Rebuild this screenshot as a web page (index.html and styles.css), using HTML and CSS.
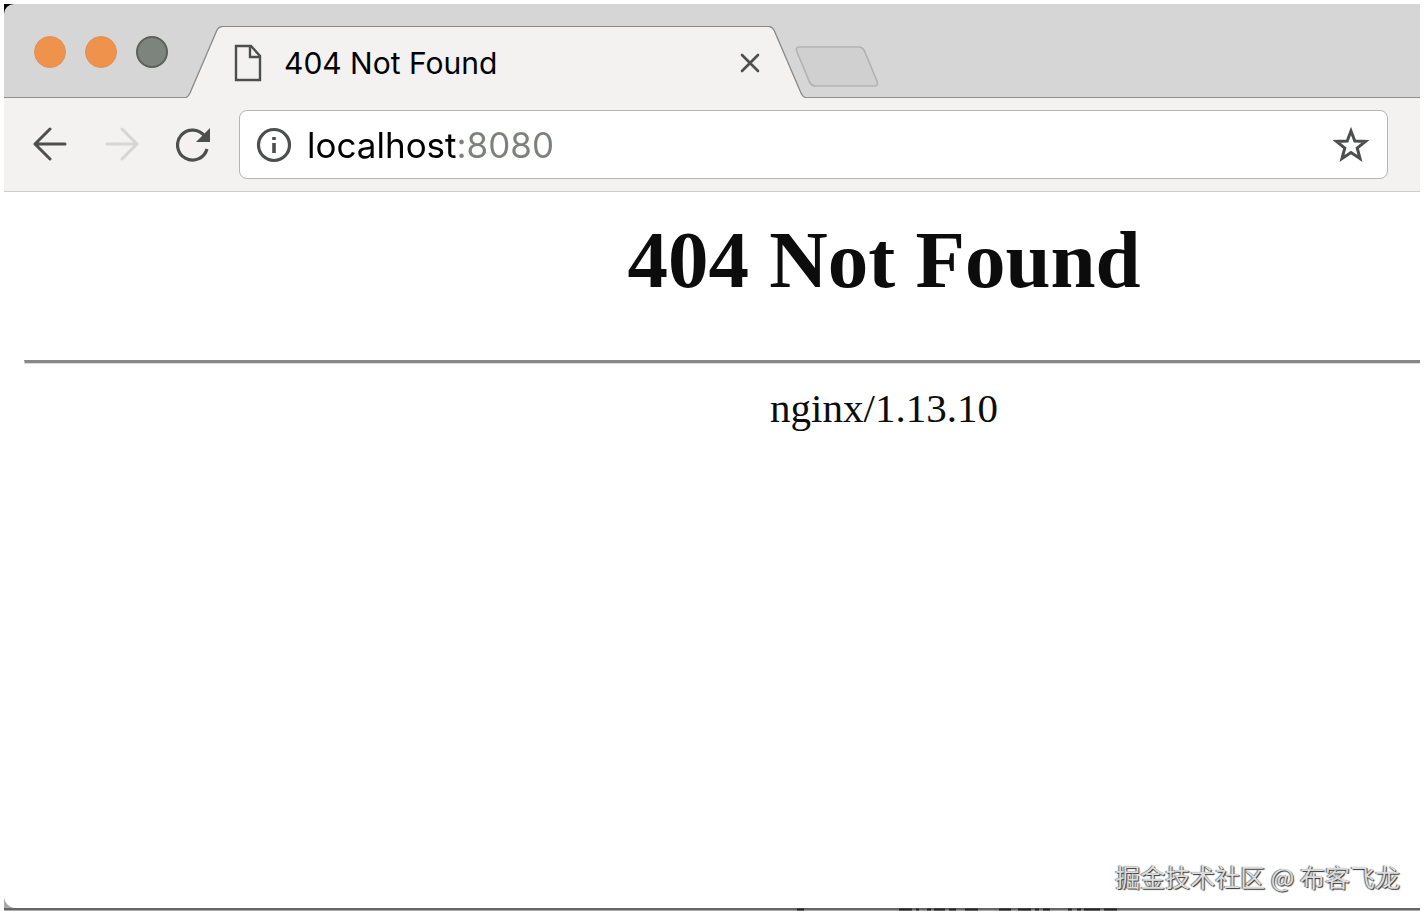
FILE: index.html
```html
<!DOCTYPE html>
<html lang="en">
<head>
    <meta charset="UTF-8">
    <meta name="viewport" content="width=device-width, initial-scale=1.0">
    <title>404 Not Found</title>
    <link rel="stylesheet" href="styles.css">
</head>
<body>

    <div class="desktop">
        <div class="window">

            <!-- Tab strip -->
            <div class="tab-strip">
                <div class="window-buttons">
                    <button type="button" class="dot" aria-label="Close window"></button>
                    <button type="button" class="dot" aria-label="Minimize window"></button>
                    <button type="button" class="dot dot-gray" aria-label="Zoom window"></button>
                </div>

                <div class="tab">
                    <svg class="tab-edge" width="36" height="72" viewBox="0 0 36 72">
                        <path d="M0 72 Q2 71 4 67 L31 5 Q33 0 36 0 V72 Z" fill="#f3f2f1"/>
                        <path d="M0 71.5 Q2 71 4 67 L31 4 Q33 .5 36 .5" fill="none" stroke="#888" stroke-width="1.3"/>
                    </svg>
                    <div class="tab-body">
                        <svg width="28" height="38" viewBox="0 0 28 38" fill="none" stroke="#4d4f4f" stroke-width="2.4">
                            <path d="M2 2 H17 L26 12 V36 H2 Z"/>
                            <path d="M16 2 V13 H26"/>
                        </svg>
                        <span class="tab-title">404 Not Found</span>
                        <button type="button" class="icon-button" aria-label="Close tab">
                            <svg width="20" height="20" viewBox="0 0 20 20" stroke="#4d4f4f" stroke-width="2.6" stroke-linecap="round">
                                <path d="M2 2 L18 18 M18 2 L2 18"/>
                            </svg>
                        </button>
                    </div>
                    <svg class="tab-edge" width="36" height="72" viewBox="0 0 36 72">
                        <path d="M36 72 Q34 71 32 67 L5 5 Q3 0 0 0 V72 Z" fill="#f3f2f1"/>
                        <path d="M36 71.5 Q34 71 32 67 L5 4 Q3 .5 0 .5" fill="none" stroke="#888" stroke-width="1.3"/>
                    </svg>
                </div>

                <button type="button" class="icon-button new-tab" aria-label="New tab">
                    <svg width="84" height="42" viewBox="0 0 84 42">
                        <path d="M4 1 H64 Q67 1 69 4 L82 35 Q84 40 79 40 H21 Q17 40 15 37 L2 6 Q0 1 4 1 Z" fill="#d0d0d0" stroke="#b2b2b2" stroke-width="1.6"/>
                    </svg>
                </button>
            </div>

            <!-- Toolbar -->
            <div class="toolbar">
                <button type="button" class="icon-button" aria-label="Back">
                    <svg width="36" height="36" viewBox="0 0 36 36" fill="none" stroke="#4d4f4f" stroke-width="3" stroke-linecap="round" stroke-linejoin="round">
                        <path d="M33 17 H3 M18 2 L3 17 L18 32"/>
                    </svg>
                </button>
                <button type="button" class="icon-button" aria-label="Forward" disabled>
                    <svg width="36" height="36" viewBox="0 0 36 36" fill="none" stroke="#d6d6d5" stroke-width="3" stroke-linecap="round" stroke-linejoin="round">
                        <path d="M3 17 H33 M18 2 L33 17 L18 32"/>
                    </svg>
                </button>
                <button type="button" class="icon-button" aria-label="Reload">
                    <svg width="36" height="36" viewBox="0 0 36 36">
                        <path d="M31 22 A15 15 0 1 1 29 9.7" fill="none" stroke="#4d4f4f" stroke-width="3.2"/>
                        <path d="M34 1 V15 H20 Z" fill="#4d4f4f"/>
                    </svg>
                </button>

                <div class="address-bar">
                    <svg width="36" height="36" viewBox="0 0 36 36">
                        <circle cx="18" cy="18" r="15.5" fill="none" stroke="#4d4f4f" stroke-width="3.2"/>
                        <path d="M16.2 10 H19.8 V13 H16.2 Z M16.2 16 H19.8 V26 H16.2 Z" fill="#4d4f4f"/>
                    </svg>
                    <input type="text" class="address" aria-label="Address" value="localhost:8080" spellcheck="false">
                    <button type="button" class="icon-button" aria-label="Bookmark this page">
                        <svg width="38" height="38" viewBox="0 0 38 38">
                            <path d="M18 5 L21.8 15 L32.5 15.4 L24.2 22 L27 32.5 L18 26.5 L9 32.5 L11.8 22 L3.5 15.4 L14.2 15 Z" fill="none" stroke="#4d4f4f" stroke-width="3"/>
                        </svg>
                    </button>
                </div>
            </div>

            <!-- The page is wider than the window, the rest is cut off -->
            <main class="page">
                <div class="page-content">
                    <h1>404 Not Found</h1>
                    <hr>
                    <p>nginx/1.13.10</p>
                </div>
            </main>
        </div>

        <!-- Edge of the window behind -->
        <div class="window-behind">
            <svg width="320" height="3" viewBox="0 0 320 3" stroke="#222" stroke-width="2">
                <path d="M0 1.5 H7 M102 1.5 H115 M119 1.5 H122 M130 1.5 H134 M137 1.5 H148 M152 1.5 H159 M168 1.5 H181 M202 1.5 H214 M221 1.5 H234 M238 1.5 H242 M246 1.5 H253 M271 1.5 H275 M280 1.5 H284 M287 1.5 H303 M307 1.5 H320"/>
            </svg>
        </div>

        <div class="watermark" lang="zh">掘金技术社区 @ 布客飞龙</div>
    </div>

</body>
</html>
```
FILE: styles.css
```css
* {
    box-sizing: border-box;
}

body {
    font-family: Inter, "Noto Sans", sans-serif;
    background-color: #ffffff;
    margin: 0;
}

svg {
    display: block;
    flex-shrink: 0;
}

.desktop {
    position: relative;
    display: flex;
    flex-direction: column;
    height: 100vh;
    padding: 4px 5px 5px 4px;
    overflow: hidden;
}

.window {
    display: flex;
    flex-direction: column;
    flex: 1;
    min-height: 0;
    background: linear-gradient(#000000 50%, #aaaaaa 50%);
}

.icon-button {
    display: block;
    padding: 0;
    border: none;
    background: none;
    cursor: pointer;
}

/* Tab strip */
.tab-strip {
    display: flex;
    align-items: flex-end;
    height: 94px;
    background-color: #d6d6d6;
    border-top-left-radius: 10px;
    box-shadow: inset 0 -1px 0 #909090;
}

.window-buttons {
    display: flex;
    gap: 19px;
    align-self: center;
    padding: 2px 18px 0 30px;
}

.dot {
    width: 32px;
    height: 32px;
    padding: 0;
    border: 1px solid #e29156;
    border-radius: 50%;
    background-color: #ee924c;
}

.dot-gray {
    border: 2px solid #5b605c;
    background-color: #7d837d;
}

.tab {
    display: flex;
    width: 619px;
}

.tab-body {
    display: flex;
    flex: 1;
    align-items: center;
    height: 72px;
    padding: 0 9px 0 12px;
    background-color: #f3f2f1;
    border-top: 1px solid #888888;
}

.tab-title {
    flex: 1;
    padding-left: 22px;
    font-size: 30px;
    line-height: 42px;
    color: #000000;
}

.new-tab {
    margin: 0 0 10px -10px;
}

/* Toolbar */
.toolbar {
    display: flex;
    align-items: center;
    gap: 36px;
    height: 94px;
    padding: 0 32px 0 28px;
    background-color: #f3f2f1;
    border-bottom: 1px solid #cccccc;
}

.address-bar {
    display: flex;
    flex: 1;
    align-items: center;
    height: 69px;
    margin-left: -9px;
    padding: 0 16px;
    background-color: #ffffff;
    border: 1px solid #b4b4b4;
    border-radius: 8px;
}

/* Host is dark, the port after it is gray */
.address {
    flex: 1;
    min-width: 0;
    height: 50px;
    padding: 0 0 0 15px;
    border: none;
    outline: none;
    font-family: inherit;
    font-size: 35px;
    color: transparent;
    background: linear-gradient(to right, #000000 165px, #7c817c 165px);
    -webkit-background-clip: text;
    background-clip: text;
}

/* Page */
.page {
    flex: 1;
    min-height: 0;
    overflow: hidden;
    background-color: #ffffff;
    border-bottom-left-radius: 12px;
}

.page-content {
    min-width: 1760px;
    padding: 22px 20px;
    font-family: "Liberation Serif", serif;
    font-size: 41px;
    line-height: 46px;
    color: #0c0c0c;
    text-align: center;
}

.page-content h1 {
    margin: 0 0 54px;
    font-size: 81px;
    line-height: 92px;
}

.page-content hr {
    height: 4px;
    margin: 0 0 21px;
    border: 1px solid #dddddd;
    border-top: 3px solid #888888;
}

.page-content p {
    margin: 0;
}

.window-behind {
    display: flex;
    justify-content: flex-end;
    height: 3px;
    padding-right: 303px;
    background: linear-gradient(#666666 67%, #aaaaaa 67%);
}

.watermark {
    position: absolute;
    right: 25px;
    bottom: 22px;
    font-family: "Noto Sans CJK SC", sans-serif;
    font-size: 25px;
    line-height: 36px;
    color: #dddddd;
    text-shadow: 1px 1px 1px #333333, -1px 0 1px #666666;
}
```
